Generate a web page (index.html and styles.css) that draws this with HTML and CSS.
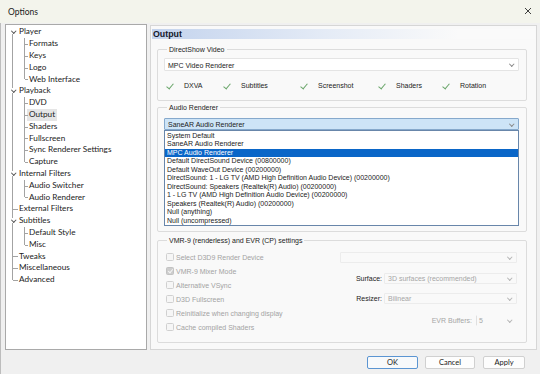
FILE: index.html
```html
<!DOCTYPE html>
<html lang="en">
<head>
<meta charset="UTF-8">
<title>Options</title>
<link rel="stylesheet" href="styles.css">
</head>
<body>
<div class="window">
    <div class="titlebar">
        <span class="title">Options</span>
        <svg class="close" width="6" height="6" viewBox="0 0 6 6"><path d="M0 0L6 6M6 0L0 6" stroke="#2b2b2b" stroke-width="0.9"/></svg>
    </div>

    <div class="client">
        <div class="tree">
            <div class="row"><span class="g root first"><i class="chev"></i></span><span class="t">Player</span></div>
            <div class="row"><span class="g root"></span><span class="g kid"></span><span class="t">Formats</span></div>
            <div class="row"><span class="g root"></span><span class="g kid"></span><span class="t">Keys</span></div>
            <div class="row"><span class="g root"></span><span class="g kid"></span><span class="t">Logo</span></div>
            <div class="row"><span class="g root"></span><span class="g kid last"></span><span class="t">Web Interface</span></div>
            <div class="row"><span class="g root"><i class="chev"></i></span><span class="t">Playback</span></div>
            <div class="row"><span class="g root"></span><span class="g kid"></span><span class="t">DVD</span></div>
            <div class="row"><span class="g root"></span><span class="g kid"></span><span class="t sel">Output</span></div>
            <div class="row"><span class="g root"></span><span class="g kid"></span><span class="t">Shaders</span></div>
            <div class="row"><span class="g root"></span><span class="g kid"></span><span class="t">Fullscreen</span></div>
            <div class="row"><span class="g root"></span><span class="g kid"></span><span class="t">Sync Renderer Settings</span></div>
            <div class="row"><span class="g root"></span><span class="g kid last"></span><span class="t">Capture</span></div>
            <div class="row"><span class="g root"><i class="chev"></i></span><span class="t">Internal Filters</span></div>
            <div class="row"><span class="g root"></span><span class="g kid"></span><span class="t">Audio Switcher</span></div>
            <div class="row"><span class="g root"></span><span class="g kid last"></span><span class="t">Audio Renderer</span></div>
            <div class="row"><span class="g root leaf"></span><span class="t">External Filters</span></div>
            <div class="row"><span class="g root"><i class="chev"></i></span><span class="t">Subtitles</span></div>
            <div class="row"><span class="g root"></span><span class="g kid"></span><span class="t">Default Style</span></div>
            <div class="row"><span class="g root"></span><span class="g kid last"></span><span class="t">Misc</span></div>
            <div class="row"><span class="g root leaf"></span><span class="t">Tweaks</span></div>
            <div class="row"><span class="g root leaf"></span><span class="t">Miscellaneous</span></div>
            <div class="row"><span class="g root leaf end"></span><span class="t">Advanced</span></div>
        </div>

        <div class="page">
            <div class="page-head">Output</div>
            <div class="page-body">
                <fieldset class="group video">
                    <legend>DirectShow Video</legend>
                    <div class="combo">MPC Video Renderer</div>
                    <div class="features">
                        <span class="feat"><i class="ok"></i>DXVA</span>
                        <span class="feat"><i class="ok"></i>Subtitles</span>
                        <span class="feat"><i class="ok"></i>Screenshot</span>
                        <span class="feat"><i class="ok"></i>Shaders</span>
                        <span class="feat"><i class="ok"></i>Rotation</span>
                    </div>
                </fieldset>

                <fieldset class="group audio">
                    <legend>Audio Renderer</legend>
                    <div class="combo-wrap">
                        <div class="combo focus">SaneAR Audio Renderer</div>
                        <ul class="droplist">
                            <li>System Default</li>
                            <li>SaneAR Audio Renderer</li>
                            <li class="on">MPC Audio Renderer</li>
                            <li>Default DirectSound Device (00800000)</li>
                            <li>Default WaveOut Device (00200000)</li>
                            <li>DirectSound: 1 - LG TV (AMD High Definition Audio Device) (00200000)</li>
                            <li>DirectSound: Speakers (Realtek(R) Audio) (00200000)</li>
                            <li>1 - LG TV (AMD High Definition Audio Device) (00200000)</li>
                            <li>Speakers (Realtek(R) Audio) (00200000)</li>
                            <li>Null (anything)</li>
                            <li>Null (uncompressed)</li>
                        </ul>
                    </div>
                </fieldset>

                <fieldset class="group vmr">
                    <legend>VMR-9 (renderless) and EVR (CP) settings</legend>
                    <div class="vmr-cols">
                        <div class="checks">
                            <label class="cb"><i class="box"></i>Select D3D9 Render Device</label>
                            <label class="cb"><i class="box checked"></i>VMR-9 Mixer Mode</label>
                            <label class="cb"><i class="box"></i>Alternative VSync</label>
                            <label class="cb"><i class="box"></i>D3D Fullscreen</label>
                            <label class="cb"><i class="box"></i>Reinitialize when changing display</label>
                            <label class="cb"><i class="box"></i>Cache compiled Shaders</label>
                        </div>
                        <div class="opts">
                            <div class="combo off device"></div>
                            <div class="opt surface"><span class="lbl">Surface:</span><div class="combo off">3D surfaces (recommended)</div></div>
                            <div class="opt resizer"><span class="lbl">Resizer:</span><div class="combo off">Bilinear</div></div>
                            <div class="opt evr"><span class="lbl dim">EVR Buffers:</span><div class="combo off small">5</div></div>
                        </div>
                    </div>
                </fieldset>
            </div>
        </div>
    </div>

    <div class="buttons">
        <button class="btn default">OK</button>
        <button class="btn">Cancel</button>
        <button class="btn apply">Apply</button>
    </div>
</div>
</body>
</html>
```

FILE: styles.css
```css
body {
    margin: 0;
    font-family: "Liberation Sans", Arial, sans-serif;
}
.window {
    width: 540px;
    height: 374px;
    background-color: #f0f0f0;
    overflow: hidden;
    display: flex;
    flex-direction: column;
    box-shadow: inset 1px 0 #bdbdbd;
}
.titlebar {
    height: 23px;
    flex: none;
    background-color: #f3f4ec;
    display: flex;
    align-items: center;
    justify-content: space-between;
    padding: 0 9px 0 8px;
    box-sizing: border-box;
    font-family: Lato, "Open Sans", sans-serif;
    font-size: 8.5px;
    color: #1b1b1b;
}
.close {
    margin-top: -2px;
}
.client {
    display: flex;
    gap: 3px;
    height: 327px;
    padding: 1px 3px 0 5px;
    box-sizing: border-box;
    flex: none;
}

/* tree */
.tree {
    width: 142px;
    background-color: #fff;
    border: 1px solid #a9a9a9;
    box-sizing: border-box;
    padding-top: 1.4px;
    font-family: Lato, "Open Sans", sans-serif;
    font-size: 8.2px;
    color: #1b1b1b;
}
.row {
    display: flex;
    height: 11.8px;
    line-height: 11.8px;
}
.g {
    flex: none;
    position: relative;
}
.g::before,
.g::after {
    content: "";
    position: absolute;
}
.g.root {
    width: 13px;
}
.g.root::before {
    left: 6px;
    top: 0;
    bottom: 0;
    border-left: 1px solid #a3a3a3;
}
.g.root.first::before {
    top: 50%;
}
.g.root.end::before {
    bottom: 50%;
}
.g.root.leaf::after {
    left: 7px;
    width: 5px;
    top: 50%;
    border-top: 1px solid #a3a3a3;
}
.g.kid {
    width: 8px;
}
.g.kid::before {
    left: 5px;
    top: 0;
    bottom: 0;
    border-left: 1px solid #a3a3a3;
}
.g.kid.last::before {
    bottom: 50%;
}
.g.kid::after {
    left: 6px;
    width: 3px;
    top: 50%;
    border-top: 1px solid #a3a3a3;
}
.chev {
    position: absolute;
    left: 4px;
    top: 3px;
    width: 6px;
    height: 5px;
    background-color: #fff;
    z-index: 1;
}
.chev::before {
    content: "";
    position: absolute;
    left: 1.5px;
    top: 0;
    width: 2.5px;
    height: 2.5px;
    border-right: 1px solid #555;
    border-bottom: 1px solid #555;
    transform: rotate(45deg);
}
.t {
    padding: 0 2px;
    white-space: nowrap;
}
.row > .g.root + .t {
    padding-left: 0;
}
.t.sel {
    background-color: #e5e5e5;
}

/* page */
.page {
    flex: 1;
    margin-top: 1px;
    height: 325px;
    box-sizing: border-box;
    border: 1px solid #d6d6d6;
    background-color: #f9f9f9;
    display: flex;
    flex-direction: column;
    font-size: 7px;
    color: #1b1b1b;
}
.page-head {
    margin: 3px 1px 0;
    height: 10px;
    line-height: 10px;
    padding-left: 1px;
    font-weight: bold;
    font-size: 8.8px;
    color: #14182a;
    background: linear-gradient(to right, #c3d3ed, #e4ebf6 45%, #fafafa 80%);
}
.page-body {
    padding: 0 9px 0 6px;
}
.group {
    margin: 0;
    padding: 0 7px 0 6px;
    border: 1px solid #dcdcdc;
    border-radius: 2px;
    min-width: 0;
}
.group legend {
    padding: 0 2px;
    margin-left: 3px;
    line-height: 9px;
    font-size: 7px;
}
.video {
    margin-top: 5.5px;
    padding-top: 4.5px;
    padding-bottom: 9px;
}
.audio {
    margin-top: 1.5px;
    padding-top: 6.5px;
    padding-bottom: 101px;
}
.vmr {
    margin-top: 3.5px;
    padding-top: 5.5px;
    padding-bottom: 8px;
    padding-right: 9px;
}

/* combos */
.combo {
    height: 13px;
    line-height: 13px;
    box-sizing: border-box;
    padding-left: 3px;
    background-color: #fff;
    border: 1px solid #e4e4e4;
    border-radius: 1px;
    position: relative;
    white-space: nowrap;
}
.combo::after {
    content: "";
    position: absolute;
    right: 5px;
    top: 50%;
    width: 2.5px;
    height: 2.5px;
    margin-top: -2.5px;
    border-right: 1px solid #8a8a8a;
    border-bottom: 1px solid #8a8a8a;
    transform: rotate(45deg);
}
.combo.focus {
    height: 12px;
    line-height: 11px;
    background-color: #cde4f7;
    border-color: #86a9cc;
}
.combo.off {
    height: 11px;
    line-height: 10px;
    background-color: #f9f9f9;
    border-color: #ececec;
    color: #a6a6a6;
}
.combo.off::after {
    border-color: #b5b5b5;
}

.features {
    display: grid;
    grid-template-columns: 57px 77px 78px 64px 1fr;
    margin: 10px 0 0 1px;
    height: 10px;
    line-height: 10px;
}
.feat {
    display: flex;
    align-items: center;
}
.ok {
    width: 9px;
    height: 8px;
    margin-right: 10px;
    position: relative;
}
.ok::before {
    content: "";
    position: absolute;
    left: 3px;
    top: 0;
    width: 3px;
    height: 6px;
    border-right: 1.4px solid #6aa66a;
    border-bottom: 1.4px solid #6aa66a;
    transform: rotate(40deg);
}

/* dropdown list */
.combo-wrap {
    position: relative;
}
.droplist {
    position: absolute;
    top: 100%;
    left: 0;
    right: 0;
    height: 96px;
    margin: 0;
    padding: 0.5px 0 0;
    list-style: none;
    box-sizing: border-box;
    background-color: #fff;
    border: 1px solid #6886aa;
    z-index: 2;
}
.droplist li {
    height: 8.5px;
    line-height: 8.5px;
    padding-left: 2px;
    white-space: nowrap;
}
.droplist li.on {
    background-color: #0a66c8;
    color: #fff;
}

/* vmr settings */
.vmr-cols {
    display: flex;
}
.checks {
    width: 176px;
    padding-left: 2px;
    box-sizing: border-box;
}
.cb {
    display: flex;
    align-items: center;
    height: 14px;
    color: #a3a3a3;
    white-space: nowrap;
}
.box {
    width: 8px;
    height: 8px;
    box-sizing: border-box;
    border: 1px solid #d0d0d0;
    border-radius: 1.5px;
    background-color: #f6f6f6;
    margin-right: 2px;
    position: relative;
}
.box.checked {
    background-color: #cdcdcd;
    border-color: #c2c2c2;
}
.box.checked::before {
    content: "";
    position: absolute;
    left: 2px;
    top: 0;
    width: 2px;
    height: 4px;
    border-right: 1px solid #f4f4f4;
    border-bottom: 1px solid #f4f4f4;
    transform: rotate(40deg);
}
.opts {
    flex: 1;
}
.combo.device {
    margin-top: 1.5px;
}
.opt {
    display: flex;
    align-items: center;
    height: 11px;
}
.surface {
    margin-top: 10px;
}
.resizer {
    margin-top: 9px;
}
.evr {
    margin-top: 11px;
    justify-content: flex-end;
}
.lbl {
    width: 42px;
    text-align: right;
    color: #222;
    flex: none;
}
.lbl.dim {
    width: auto;
    color: #a6a6a6;
}
.opt .combo {
    flex: 1;
    margin-left: 2px;
}
.opt .combo.small {
    flex: none;
    width: 41px;
    margin-left: 4px;
    padding-left: 2px;
    border-color: transparent transparent transparent #e0e0e0;
}

/* dialog buttons */
.buttons {
    display: flex;
    justify-content: flex-end;
    gap: 7px;
    padding-right: 15px;
    margin-top: 6px;
}
.btn {
    width: 50px;
    height: 13px;
    padding: 0;
    font-family: Lato, "Open Sans", sans-serif;
    font-size: 7.5px;
    color: #1b1b1b;
    background-color: #fdfdfd;
    border: 1px solid #d0d0d0;
    border-radius: 2px;
}
.btn.default {
    width: 51px;
    border-color: #5b95d2;
    background-color: #f7f9fb;
}
.btn.apply {
    width: 42px;
    margin-left: 1px;
}
```
